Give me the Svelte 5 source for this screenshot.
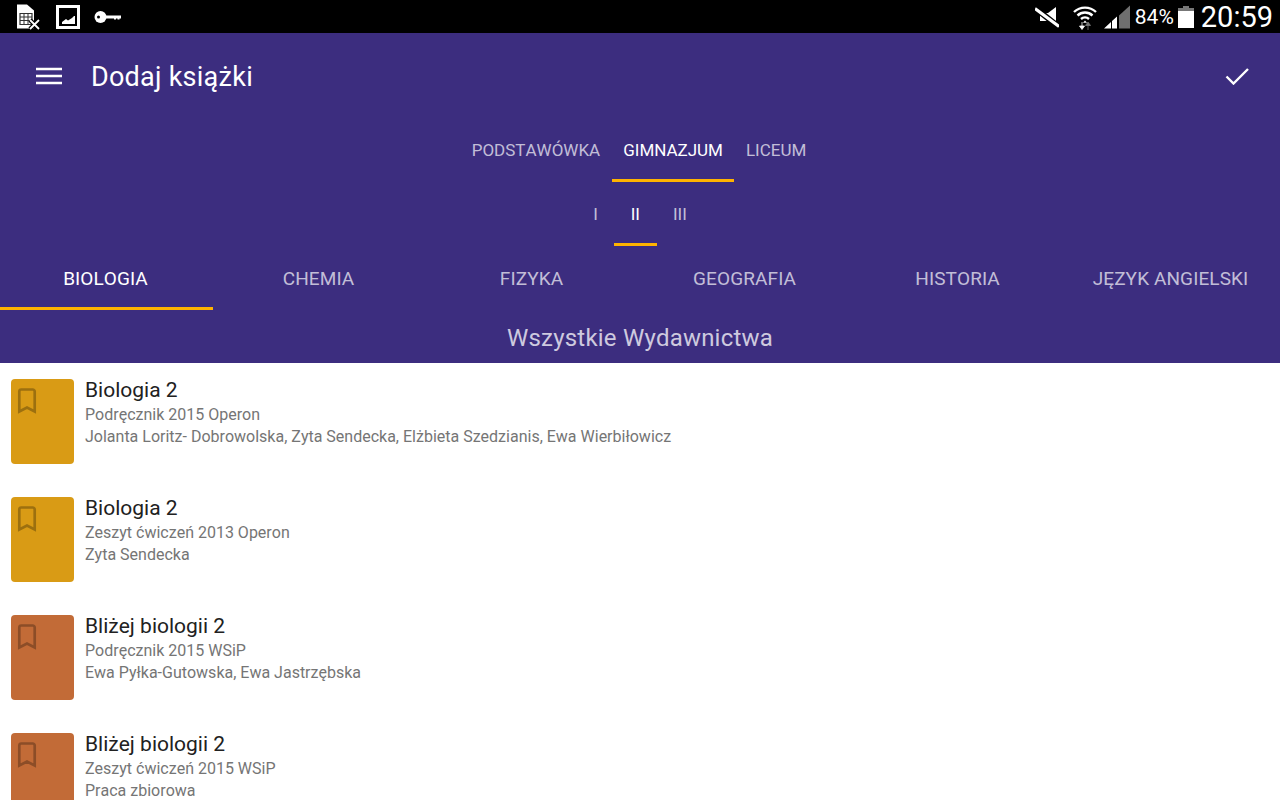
<script>
  const levels = [
    { label: 'PODSTAWÓWKA' },
    { label: 'GIMNAZJUM', active: true },
    { label: 'LICEUM' }
  ];
  const grades = [{ label: 'I' }, { label: 'II', active: true }, { label: 'III' }];
  const subjects = ['BIOLOGIA', 'CHEMIA', 'FIZYKA', 'GEOGRAFIA', 'HISTORIA', 'JĘZYK ANGIELSKI'];
  const books = [
    { title: 'Biologia 2', kind: 'Podręcznik 2015 Operon', authors: 'Jolanta Loritz- Dobrowolska, Zyta Sendecka, Elżbieta Szedzianis, Ewa Wierbiłowicz', color: '#d99b15' },
    { title: 'Biologia 2', kind: 'Zeszyt ćwiczeń 2013 Operon', authors: 'Zyta Sendecka', color: '#d99b15' },
    { title: 'Bliżej biologii 2', kind: 'Podręcznik 2015 WSiP', authors: 'Ewa Pyłka-Gutowska, Ewa Jastrzębska', color: '#c26b37' },
    { title: 'Bliżej biologii 2', kind: 'Zeszyt ćwiczeń 2015 WSiP', authors: 'Praca zbiorowa', color: '#c26b37' }
  ];
</script>

<div class="screen">
  <div class="status">
    <div class="status-left">
      <svg class="i-sim" width="24" height="28" viewBox="0 0 24 28">
        <path d="M1 1.500h10l7 6v18H1z" fill="#fff" />
        <path d="M4 10.500h12v11H4z" fill="none" stroke="#333" stroke-width="1.200" />
        <path d="M4 14h12M4 17.500h12M8 10.500v11M12 10.500v11" stroke="#333" stroke-width="1" />
        <path d="M14 17l9 9M23 17l-9 9" stroke="#000" stroke-width="4.500" />
        <path d="M14 17l9 9M23 17l-9 9" stroke="#fff" stroke-width="1.800" />
      </svg>
      <svg class="i-pic" width="24" height="24" viewBox="0 0 24 24">
        <rect x="1.500" y="1.500" width="21" height="21" fill="none" stroke="#fff" stroke-width="3" />
        <path d="M6 19v-2l4-3 2 1.500 4-2.500 2-2 1 0v8z" fill="#fff" />
      </svg>
      <svg class="i-key" width="28" height="14" viewBox="0 0 28 14">
        <circle cx="6.500" cy="7" r="6" fill="#fff" />
        <circle cx="4.500" cy="7" r="1.500" fill="#000" />
        <path d="M12 5.500h15v3h-1.500v1h-2v-1h-1.500v1h-2v-1H12z" fill="#fff" />
      </svg>
    </div>
    <div class="status-right">
      <svg class="i-mute" width="24" height="22" viewBox="0 0 24 22">
        <path d="M21 1v20l-8-6H5V7h8z" fill="#fff" />
        <path d="M0 2l24 19" stroke="#000" stroke-width="6" />
        <path d="M0 2.500l24 18" stroke="#fff" stroke-width="3" />
      </svg>
      <svg class="i-wifi" width="26" height="28" viewBox="0 0 26 28">
        <path d="M2 9a16 16 0 0 1 22 0M5.500 12.500a11 11 0 0 1 15 0M9 16a6 6 0 0 1 8 0" fill="none" stroke="#fff" stroke-width="2.400" />
        <path d="M13 17.500l-2 2.200h4z" fill="#fff" />
        <path d="M10 19v6M7.500 23l2.500 3.500 2.500-3.500z" fill="#fff" stroke="#fff" stroke-width="0.800" />
        <path d="M16 27v-6M13.500 22.500l2.500-3.500 2.500 3.500z" fill="#777" stroke="#777" stroke-width="0.800" />
      </svg>
      <svg class="i-signal" width="26" height="24" viewBox="0 0 26 24">
        <path d="M15 23.500V10.500L26 0.500v23z" fill="#6f6f6f" />
        <path d="M0 23.500l7-6.500v6.500zM8 23.500v-7.500l5-4.500v12z" fill="#fff" />
      </svg>
      <span class="pct">84%</span>
      <svg class="i-batt" width="16" height="22" viewBox="0 0 16 22">
        <path d="M5 0h6v3H5z" fill="#777" />
        <path d="M0 2h16v4H0z" fill="#777" />
        <path d="M0 5h16v17H0z" fill="#fff" />
      </svg>
      <span class="clock">20:59</span>
    </div>
  </div>

  <header class="header">
    <div class="toolbar">
      <svg class="menu" width="26" height="18" viewBox="0 0 26 18">
        <path d="M0 2h26M0 9h26M0 16h26" stroke="#fff" stroke-width="2.300" />
      </svg>
      <h1>Dodaj książki</h1>
      <svg class="check" width="24" height="18" viewBox="0 0 24 18">
        <path d="M1.500 9.500l7 7L23 2" fill="none" stroke="#fff" stroke-width="2.400" />
      </svg>
    </div>

    <div class="levels">
      {#each levels as l}
        <div class="level" class:active={l.active}>{l.label}</div>
      {/each}
    </div>

    <div class="grades">
      {#each grades as g}
        <div class="grade" class:active={g.active}>{g.label}</div>
      {/each}
    </div>

    <div class="subjects">
      {#each subjects as s, i}
        <div class="subject" class:active={i === 0}>{s}</div>
      {/each}
    </div>

    <div class="publisher">Wszystkie Wydawnictwa</div>
  </header>

  <main class="list">
    {#each books as b}
      <article class="book">
        <div class="cover" style="background:{b.color}">
          <svg width="20" height="26" viewBox="0 0 20 26">
            <path d="M2.300 23.500V3.500a2 2 0 0 1 2-2h11.400a2 2 0 0 1 2 2v20L10 19.500z" fill="none" stroke="rgba(0,0,0,0.28)" stroke-width="2.700" />
          </svg>
        </div>
        <div class="meta">
          <div class="title">{b.title}</div>
          <div class="sub">{b.kind}</div>
          <div class="sub">{b.authors}</div>
        </div>
      </article>
    {/each}
  </main>
</div>

<style>
  :global(body) { margin: 0; background: #fff; }
  .screen {
    width: 1280px; height: 800px; overflow: hidden;
    font-family: Roboto, "Noto Sans", sans-serif;
    font-kerning: none;
    display: flex; flex-direction: column;
  }
  .status {
    height: 33px; flex: none; background: #000; color: #fff;
    display: flex; justify-content: space-between; align-items: center;
    padding: 0 7px 0 16px;
  }
  .status-left, .status-right { display: flex; align-items: center; }
  .i-pic { margin-left: 16px; }
  .i-key { margin-left: 14px; }
  .i-wifi { margin-left: 13px; }
  .i-signal { margin-left: 6px; }
  .pct { font-size: 21px; margin-left: 5px; }
  .i-batt { margin-left: 4px; }
  .clock { font-size: 29px; margin-left: 7px; }

  .header { background: #3c2d7f; flex: none; height: 330px; display: flex; flex-direction: column; color: #fff; }
  .toolbar { height: 86px; display: flex; align-items: center; padding: 0 31px 0 36px; flex: none; }
  h1 { font-size: 27px; font-weight: 400; margin: 2px 0 0 29px; flex: 1; letter-spacing: 0.25px; }
  .menu { flex: none; }
  .check { flex: none; }

  .levels { display: flex; justify-content: center; height: 63px; flex: none; margin-left: -2px; }
  .level {
    font-size: 17px; padding: 0 11.500px; line-height: 62px; color: rgba(255,255,255,0.7);
    border-bottom: 3px solid transparent; box-sizing: border-box; height: 63px;
  }
  .level.active { color: #fff; border-bottom-color: #ffb300; }

  .grades { display: flex; justify-content: center; height: 64px; flex: none; }
  .grade {
    font-size: 17px; padding: 0 16.500px; text-align: center; line-height: 64px; height: 64px;
    box-sizing: border-box; color: rgba(255,255,255,0.7); border-bottom: 3px solid transparent;
  }
  .grade.active { color: #fff; border-bottom-color: #ffb300; }

  .subjects { display: grid; grid-template-columns: repeat(6, 213px); height: 64px; flex: none; }
  .subject {
    font-size: 19px; text-align: center; line-height: 65px; height: 64px; box-sizing: border-box;
    color: rgba(255,255,255,0.7); border-bottom: 3px solid transparent; white-space: nowrap;
    padding-right: 2px; letter-spacing: 0.1px;
  }
  .subject.active { color: #fff; border-bottom-color: #ffb300; }

  .publisher { font-size: 24px; text-align: center; color: rgba(255,255,255,0.75); padding-top: 4px; line-height: 49px; letter-spacing: 0.2px; }

  .list { background: #fff; flex: 1; padding-top: 16px; display: flex; flex-direction: column; gap: 32px; }
  .book { display: flex; padding-left: 11px; height: 86px; flex: none; }
  .cover { width: 63px; height: 85px; border-radius: 4px; padding: 9px 0 0 6px; box-sizing: border-box; flex: none; }
  .cover svg { display: block; }
  .meta { margin-left: 11px; }
  .title { font-size: 21px; color: #212121; line-height: 22px; margin-top: 0; }
  .sub { font-size: 16px; color: #757575; line-height: 22px; }
  .title + .sub { margin-top: 3px; }
</style>
